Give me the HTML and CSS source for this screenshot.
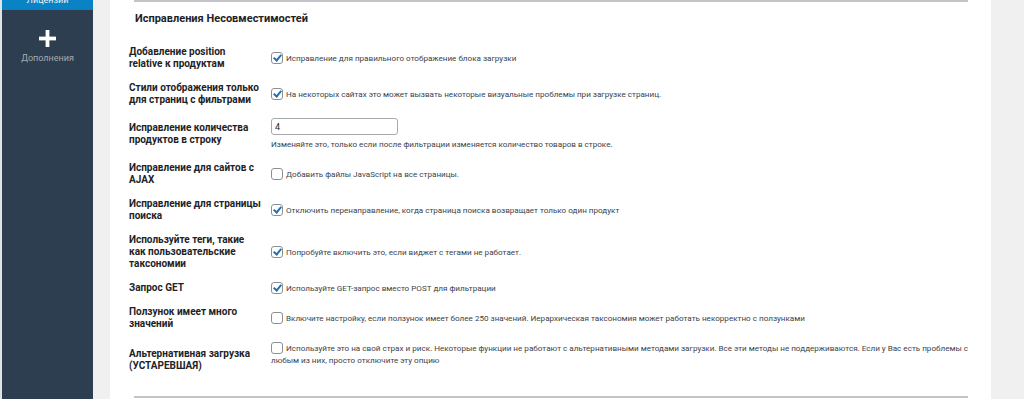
FILE: index.html
```html
<!DOCTYPE html>
<html lang="ru">
  <head>
    <meta charset="UTF-8" />
    <title>Исправления Несовместимостей</title>
    <link rel="stylesheet" href="styles.css">
  </head>
  <body>
    <div class="admin">
      <aside class="sidebar">
        <div class="menu-item active">Лицензии</div>
        <div class="menu-item addons">
          <svg class="plus" width="18" height="18" viewBox="0 0 18 18">
            <rect x="7" y="0" width="4" height="18" fill="#fff" />
            <rect x="0" y="7" width="18" height="4" fill="#fff" />
          </svg>
          <span>Дополнения</span>
        </div>
      </aside>

      <main class="main">
        <div class="card">
          <hr class="line" />
          <h2 class="section-title">Исправления Несовместимостей</h2>

          <table class="form-table">
            <tr>
              <th>Добавление position relative к продуктам</th>
              <td><label class="check"><span class="box on"></span>Исправление для правильного отображение блока загрузки</label></td>
            </tr>
            <tr>
              <th>Стили отображения только для страниц с фильтрами</th>
              <td><label class="check"><span class="box on"></span>На некоторых сайтах это может вызвать некоторые визуальные проблемы при загрузке страниц.</label></td>
            </tr>
            <tr class="row-input">
              <th>Исправление количества продуктов в строку</th>
              <td>
                <input class="text-input" type="text" value="4" />
                <p class="description">Изменяйте это, только если после фильтрации изменяется количество товаров в строке.</p>
              </td>
            </tr>
            <tr>
              <th>Исправление для сайтов с AJAX</th>
              <td><label class="check"><span class="box"></span>Добавить файлы JavaScript на все страницы.</label></td>
            </tr>
            <tr>
              <th>Исправление для страницы поиска</th>
              <td><label class="check"><span class="box on"></span>Отключить перенаправление, когда страница поиска возвращает только один продукт</label></td>
            </tr>
            <tr>
              <th>Используйте теги, такие как пользовательские таксономии</th>
              <td><label class="check"><span class="box on"></span>Попробуйте включить это, если виджет с тегами не работает.</label></td>
            </tr>
            <tr>
              <th>Запрос GET</th>
              <td><label class="check"><span class="box on"></span>Используйте GET-запрос вместо POST для фильтрации</label></td>
            </tr>
            <tr>
              <th>Ползунок имеет много значений</th>
              <td><label class="check"><span class="box"></span>Включите настройку, если ползунок имеет более 250 значений. Иерархическая таксономия может работать некорректно с ползунками</label></td>
            </tr>
            <tr class="row-long">
              <th>Альтернативная загрузка (УСТАРЕВШАЯ)</th>
              <td><label class="check"><span class="box"></span>Используйте это на свой страх и риск. Некоторые функции не работают с альтернативными методами загрузки. Все эти методы не поддерживаются. Если у Вас есть проблемы с любым из них, просто отключите эту опцию</label></td>
            </tr>
          </table>

          <hr class="line bottom" />
        </div>
      </main>
    </div>
  </body>
</html>
```

FILE: styles.css
```css
:root {
  --sidebar: #2c3e50;
  --blue: #0a83c6;
  --gray-bg: #f0f0f1;
  --text: #1d2327;
  --muted: #3c434a;
  --line: #c3c4c7;
  --check: #2271b1;
}
body {
  margin: 0;
  font-family: Roboto, "Open Sans", sans-serif;
  color: var(--text);
}
.admin {
  display: flex;
  height: 399px;
  overflow: hidden;
}
.sidebar {
  width: 93px;
  flex-shrink: 0;
  background-color: var(--sidebar);
  border-left: 2px solid #dfe3e6;
  box-sizing: border-box;
}
.menu-item {
  font-size: 9px;
  color: #a7aaad;
  text-align: center;
}
.menu-item.active {
  background-color: var(--blue);
  color: #e6f2fa;
  height: 10px;
  line-height: 0;
  overflow: hidden;
}
.addons {
  display: flex;
  flex-direction: column;
  align-items: center;
  padding-top: 20px;
  gap: 6px;
}
.plus {
  width: 17px;
  height: 17px;
}
.main {
  flex: 1;
  background-color: var(--gray-bg);
  padding: 0 33px 0 17px;
}
.card {
  background-color: #ffffff;
  height: 100%;
  padding: 0 23px 0 19px;
  box-sizing: border-box;
}
.line {
  margin: 0 0 0 5px;
  border: 0;
  border-top: 2px solid var(--line);
}
.line.bottom {
  margin-top: 18px;
}
.section-title {
  font-size: 11px;
  font-weight: bold;
  margin: 10px 0 14px 6px;
  line-height: 14px;
}
.form-table {
  border-collapse: collapse;
}
.form-table th {
  width: 132px;
  padding: 6px 10px 6px 0;
  text-align: left;
  vertical-align: middle;
  font-size: 10px;
  line-height: 12px;
  font-weight: bold;
}
.form-table td {
  padding: 6px 0;
  vertical-align: middle;
  font-size: 8.1px;
  line-height: 12px;
  color: var(--muted);
}
.check {
  display: block;
}
.box {
  display: inline-block;
  box-sizing: border-box;
  width: 12px;
  height: 12px;
  border: 1px solid #8c8f94;
  border-radius: 3px;
  margin-right: 3px;
  vertical-align: -3px;
  background-color: #ffffff;
  position: relative;
}
.box.on::after {
  content: "";
  position: absolute;
  left: 3px;
  top: 0px;
  width: 3px;
  height: 6px;
  border: solid var(--check);
  border-width: 0 2px 2px 0;
  transform: rotate(40deg);
}
.text-input {
  display: block;
  width: 127px;
  height: 17px;
  box-sizing: border-box;
  border: 1px solid #a7aaad;
  border-radius: 3px;
  padding: 0 3px;
  font-family: inherit;
  font-size: 9px;
  color: var(--text);
  margin: 0;
}
.description {
  margin: 3px 0 0;
}
.row-long th {
  padding-top: 12px;
}
.row-long td {
  vertical-align: top;
  padding-top: 6px;
}
```
